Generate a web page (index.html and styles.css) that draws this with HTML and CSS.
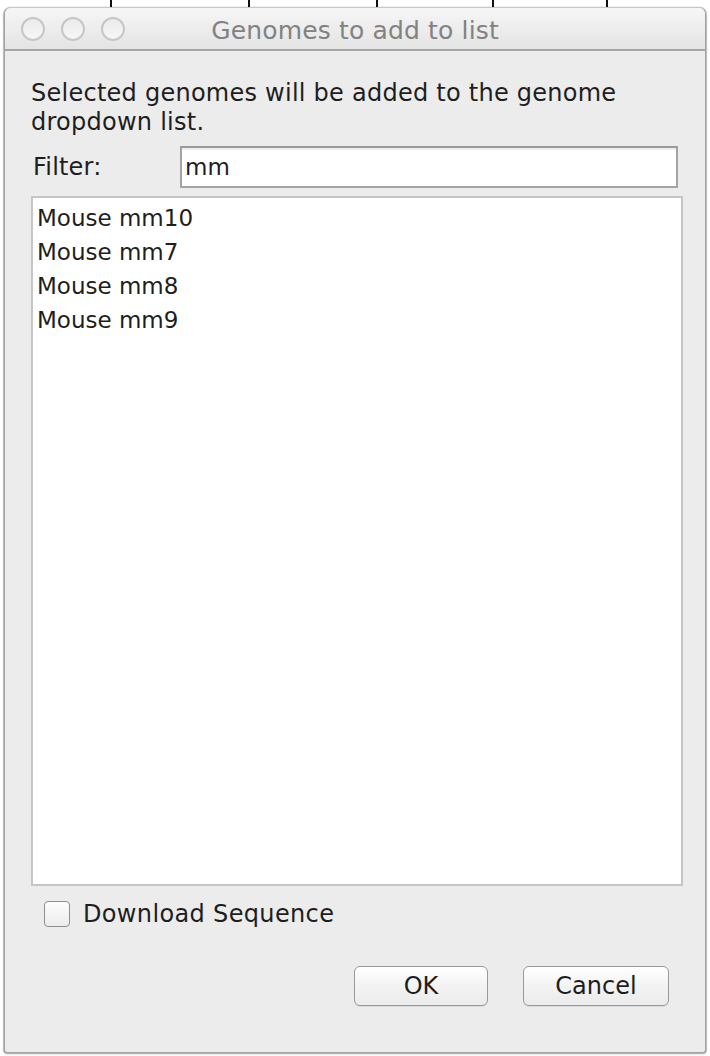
FILE: index.html
```html
<!DOCTYPE html>
<html>
<head>
<meta charset="utf-8">
<link rel="stylesheet" href="styles.css">
</head>
<body>
<div class="desk">
  <div class="ruler">
    <span class="tick t1"></span>
    <span class="tick t2"></span>
    <span class="tick t3"></span>
    <span class="tick t4"></span>
    <span class="tick t5"></span>
  </div>
  <div class="window">
    <div class="titlebar">
      <div class="lights">
        <span class="light"></span>
        <span class="light"></span>
        <span class="light"></span>
      </div>
      <div class="title">Genomes to add to list</div>
    </div>
    <div class="content">
      <p class="desc">Selected genomes will be added to the genome dropdown list.</p>
      <div class="filter-row">
        <label class="filter-label">Filter:</label>
        <div class="field">mm</div>
      </div>
      <ul class="list">
        <li>Mouse mm10</li>
        <li>Mouse mm7</li>
        <li>Mouse mm8</li>
        <li>Mouse mm9</li>
      </ul>
      <div class="check-row">
        <span class="checkbox"></span>
        <span class="check-label">Download Sequence</span>
      </div>
      <div class="buttons">
        <div class="btn btn-ok">OK</div>
        <div class="btn btn-cancel">Cancel</div>
      </div>
    </div>
  </div>
</div>
</body>
</html>
```
FILE: styles.css
```css
html, body {
  margin: 0;
  padding: 0;
  background: #ffffff;
}
body {
  width: 710px;
  height: 1056px;
  overflow: hidden;
  font-family: "DejaVu Sans", "Liberation Sans", sans-serif;
  color: #1e1e1e;
}
.desk {
  width: 710px;
}
.ruler {
  height: 7px;
  display: flex;
}
.tick {
  display: block;
  width: 2px;
  height: 7px;
  background: #111;
}
.t1 { margin-left: 110px; }
.t2 { margin-left: 136px; }
.t3 { margin-left: 126px; }
.t4 { margin-left: 114px; }
.t5 { margin-left: 112px; }

.window {
  margin-left: 4px;
  width: 700px;
  height: 1044px;
  border: 1px solid #a2a2a2;
  border-top-color: #c8c8c8;
  border-radius: 7px 7px 3px 3px;
  background: #ececec;
  box-shadow: 0 1px 2px rgba(0,0,0,0.35), 1px 0 1px rgba(0,0,0,0.2), -1px 0 1px rgba(0,0,0,0.2);
  overflow: hidden;
  display: flex;
  flex-direction: column;
}
.titlebar {
  height: 41px;
  flex: none;
  border-bottom: 2px solid #a6a6a6;
  background: linear-gradient(#f6f6f6, #e4e4e4);
  display: flex;
  align-items: center;
  position: relative;
}
.lights {
  display: flex;
  gap: 16px;
  padding-left: 16px;
  margin-top: 1px;
}
.light {
  display: block;
  width: 20px;
  height: 20px;
  border-radius: 50%;
  border: 2px solid #c6c6c6;
  background: linear-gradient(#ececec, #f6f6f6);
}
.title {
  position: absolute;
  left: 0;
  right: 0;
  top: 8px;
  text-align: center;
  font-size: 25px;
  letter-spacing: 0.15px;
  color: #828282;
  line-height: 30px;
}
.content {
  flex: 1;
  padding: 0 24px 0 26px;
  display: flex;
  flex-direction: column;
}
.desc {
  margin: 28px 0 0 0;
  font-size: 24px;
  line-height: 29px;
  width: 640px;
  letter-spacing: 0.25px;
}
.filter-row {
  display: flex;
  align-items: center;
  margin-top: 9px;
  height: 42px;
}
.filter-label {
  font-size: 24px;
  width: 147px;
  padding-left: 2px;
  letter-spacing: 0.2px;
}
.field {
  width: 491px;
  height: 38px;
  border: 2px solid #a4a4a4;
  border-top-color: #999;
  background: #fff;
  box-shadow: inset 0 2px 0 #efefef;
  font-size: 23px;
  line-height: 38px;
  padding-left: 3px;
  box-sizing: content-box;
  flex: none;
}
.list {
  list-style: none;
  margin: 8px 0 0 0;
  padding: 3px 0 0 4px;
  width: 644px;
  height: 683px;
  border: 2px solid #c6c6c6;
  background: #fff;
}
.list li {
  font-size: 23px;
  line-height: 34px;
}
.check-row {
  display: flex;
  align-items: center;
  margin-top: 14px;
  padding-left: 13px;
  height: 28px;
}
.checkbox {
  display: block;
  width: 24px;
  height: 24px;
  border: 1.5px solid #8e8e8e;
  border-radius: 4px;
  background: linear-gradient(#fdfdfd, #ececec);
  margin-right: 13px;
}
.check-label {
  font-size: 24px;
  letter-spacing: 0.35px;
}
.buttons {
  display: flex;
  justify-content: flex-end;
  gap: 35px;
  margin-top: 38px;
  padding-right: 12px;
}
.btn {
  height: 38px;
  border: 1px solid #999;
  border-radius: 6px;
  background: linear-gradient(#ffffff, #f3f3f3 50%, #ebebeb);
  box-shadow: 0 1px 0 rgba(0,0,0,0.08);
  font-size: 24px;
  line-height: 38px;
  text-align: center;
}
.btn-ok { width: 132px; }
.btn-cancel { width: 144px; }
```
